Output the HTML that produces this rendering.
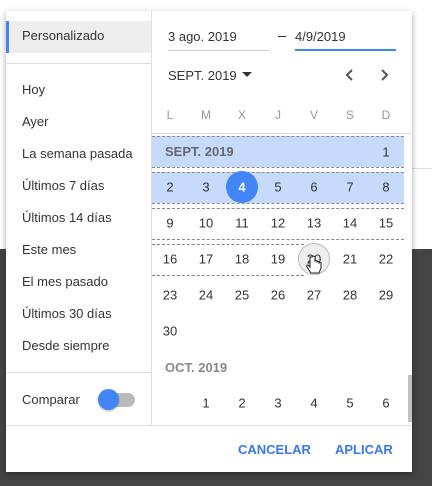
<!DOCTYPE html>
<html><head><style>
*{margin:0;padding:0;box-sizing:border-box}
body{width:432px;height:486px;position:relative;overflow:hidden;background:#fff;font-family:"Liberation Sans",sans-serif;color:#333}
.dark{position:absolute;left:0;top:249px;width:432px;height:237px;background:#444}
.panel{position:absolute;left:6px;top:11px;width:406px;height:461px;background:#fff;box-shadow:0 2px 6px rgba(0,0,0,.35)}
.a{position:absolute}
.t{position:absolute;font-size:13px;color:#333;white-space:nowrap}
.n{position:absolute;width:36px;text-align:center;font-size:13px;color:#333;transform:translateY(-50%)}
.dash{position:absolute;height:0;border-top:1px dashed #888}
</style></head><body>
<div class="a" style="left:412px;top:168px;width:20px;height:1px;background:#ddd"></div>
<div class="dark"></div>
<div class="panel"></div>
<div class="a" style="left:6px;top:21px;width:145px;height:32px;background:#eee"></div>
<div class="a" style="left:6px;top:21px;width:3px;height:32px;background:#4285f4"></div>
<div class="t" style="left:22px;top:28px">Personalizado</div>
<div class="a" style="left:6px;top:63px;width:145px;height:1px;background:#ddd"></div>
<div class="a" style="left:151px;top:11px;width:1px;height:414px;background:#e0e0e0"></div>
<div class="t" style="left:22px;top:82px">Hoy</div>
<div class="t" style="left:22px;top:114px">Ayer</div>
<div class="t" style="left:22px;top:146px">La semana pasada</div>
<div class="t" style="left:22px;top:178px">Últimos 7 días</div>
<div class="t" style="left:22px;top:210px">Últimos 14 días</div>
<div class="t" style="left:22px;top:242px">Este mes</div>
<div class="t" style="left:22px;top:274px">El mes pasado</div>
<div class="t" style="left:22px;top:306px">Últimos 30 días</div>
<div class="t" style="left:22px;top:338px">Desde siempre</div>
<div class="a" style="left:6px;top:372px;width:145px;height:1px;background:#ddd"></div>
<div class="t" style="left:22px;top:392px">Comparar</div>
<div class="a" style="left:101px;top:393px;width:34px;height:14px;border-radius:7px;background:#bbb"></div>
<div class="a" style="left:98px;top:389px;width:21px;height:21px;border-radius:50%;background:#4285f4;box-shadow:0 1px 2px rgba(0,0,0,.3)"></div>
<div class="a" style="left:6px;top:425px;width:406px;height:1px;background:#ddd"></div>
<div class="t" style="left:238px;top:442px;color:#3b78e7;font-size:13px;font-weight:bold">CANCELAR</div>
<div class="t" style="left:335px;top:442px;color:#3b78e7;font-size:13px;font-weight:bold">APLICAR</div>
<div class="t" style="left:168px;top:29px">3 ago. 2019</div>
<div class="a" style="left:168px;top:50px;width:101px;height:1px;background:#ccc"></div>
<div class="a" style="left:278px;top:36px;width:8px;height:1px;background:#333"></div>
<div class="t" style="left:295px;top:29px">4/9/2019</div>
<div class="a" style="left:295px;top:49px;width:101px;height:2px;background:#4285f4"></div>
<div class="t" style="left:168px;top:68px">SEPT. 2019</div>
<div class="a" style="left:242px;top:72px;width:0;height:0;border-left:5px solid transparent;border-right:5px solid transparent;border-top:5px solid #333"></div>
<svg class="a" style="left:340px;top:66px" width="60" height="18"><path d="M12 4 L7 9 L12 14" stroke="#555" stroke-width="2" fill="none"/><path d="M42 4 L47 9 L42 14" stroke="#555" stroke-width="2" fill="none"/></svg>
<div class="n" style="left:152px;top:115px;color:#999;font-size:12px">L</div>
<div class="n" style="left:188px;top:115px;color:#999;font-size:12px">M</div>
<div class="n" style="left:224px;top:115px;color:#999;font-size:12px">X</div>
<div class="n" style="left:260px;top:115px;color:#999;font-size:12px">J</div>
<div class="n" style="left:296px;top:115px;color:#999;font-size:12px">V</div>
<div class="n" style="left:332px;top:115px;color:#999;font-size:12px">S</div>
<div class="n" style="left:368px;top:115px;color:#999;font-size:12px">D</div>
<div class="a" style="left:152px;top:133px;width:260px;height:1px;background:#ddd"></div>
<div class="a" style="left:152px;top:136px;width:252px;height:31px;background:#c6dafc"></div>
<div class="a" style="left:152px;top:172px;width:252px;height:31px;background:#c6dafc"></div>
<div class="dash" style="left:152px;top:136px;width:252px"></div>
<div class="dash" style="left:152px;top:167px;width:252px"></div>
<div class="dash" style="left:152px;top:172px;width:252px"></div>
<div class="dash" style="left:152px;top:203px;width:252px"></div>
<div class="dash" style="left:152px;top:208px;width:252px"></div>
<div class="dash" style="left:152px;top:239px;width:252px"></div>
<div class="dash" style="left:152px;top:244px;width:152px"></div>
<div class="dash" style="left:152px;top:275px;width:152px"></div>
<div class="t" style="left:165px;top:144px;color:#666;font-weight:bold">SEPT. 2019</div>
<div class="n" style="left:368px;top:152px">1</div>
<div class="a" style="left:226px;top:171px;width:32px;height:32px;border-radius:50%;background:#4285f4"></div>
<div class="a" style="left:298px;top:243px;width:32px;height:32px;border-radius:50%;background:#eee;border:1px solid #bbb"></div>
<div class="n" style="left:152px;top:187px">2</div><div class="n" style="left:188px;top:187px">3</div><div class="n" style="left:224px;top:187px;color:#fff;font-weight:bold">4</div><div class="n" style="left:260px;top:187px">5</div><div class="n" style="left:296px;top:187px">6</div><div class="n" style="left:332px;top:187px">7</div><div class="n" style="left:368px;top:187px">8</div>
<div class="n" style="left:152px;top:223px">9</div><div class="n" style="left:188px;top:223px">10</div><div class="n" style="left:224px;top:223px">11</div><div class="n" style="left:260px;top:223px">12</div><div class="n" style="left:296px;top:223px">13</div><div class="n" style="left:332px;top:223px">14</div><div class="n" style="left:368px;top:223px">15</div>
<div class="n" style="left:152px;top:259px">16</div><div class="n" style="left:188px;top:259px">17</div><div class="n" style="left:224px;top:259px">18</div><div class="n" style="left:260px;top:259px">19</div><div class="n" style="left:296px;top:259px">20</div><div class="n" style="left:332px;top:259px">21</div><div class="n" style="left:368px;top:259px">22</div>
<div class="n" style="left:152px;top:295px">23</div><div class="n" style="left:188px;top:295px">24</div><div class="n" style="left:224px;top:295px">25</div><div class="n" style="left:260px;top:295px">26</div><div class="n" style="left:296px;top:295px">27</div><div class="n" style="left:332px;top:295px">28</div><div class="n" style="left:368px;top:295px">29</div>
<div class="n" style="left:152px;top:331px">30</div>
<div class="t" style="left:165px;top:360px;color:#888;font-weight:bold">OCT. 2019</div>
<div class="n" style="left:188px;top:403px">1</div><div class="n" style="left:224px;top:403px">2</div><div class="n" style="left:260px;top:403px">3</div><div class="n" style="left:296px;top:403px">4</div><div class="n" style="left:332px;top:403px">5</div><div class="n" style="left:368px;top:403px">6</div>
<div class="a" style="left:408px;top:375px;width:4px;height:47px;background:#c1c1c1"></div>
<svg class="a" style="left:305px;top:255px" width="18" height="22"><path d="M5 2 v10 l-2 -2 q-2 0 -1 2 l4 6 h8 l2 -5 v-5 q-1 -1 -2 0 v-1 q-1 -1 -2 0 v-1 q-1 -1 -2 0 v-4 q-1 -2 -3 0 z" fill="#fff" stroke="#222" stroke-width="1"/></svg>
</body></html>
